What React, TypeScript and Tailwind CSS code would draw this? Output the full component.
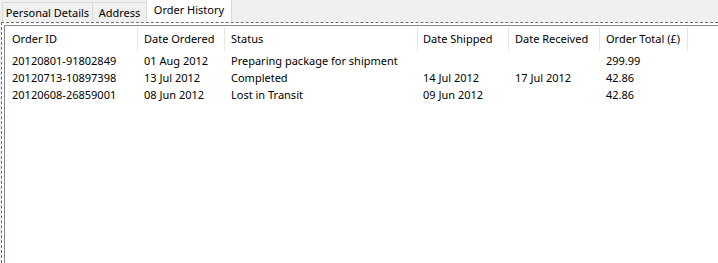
const columns = [
  { label: "Order ID", width: "w-[133px]", pad: "pl-[7px]" },
  { label: "Date Ordered", width: "w-[87px]", pad: "pl-[6px]" },
  { label: "Status", width: "w-[193px]", pad: "pl-[6px]" },
  { label: "Date Shipped", width: "w-[91px]", pad: "pl-[5px]" },
  { label: "Date Received", width: "w-[91px]", pad: "pl-[6px]" },
  { label: "Order Total (£)", width: "w-[88px]", pad: "pl-[6px]" },
];

const orders = [
  ["20120801-91802849", "01 Aug 2012", "Preparing package for shipment", "", "", "299.99"],
  ["20120713-10897398", "13 Jul 2012", "Completed", "14 Jul 2012", "17 Jul 2012", "42.86"],
  ["20120608-26859001", "08 Jun 2012", "Lost in Transit", "09 Jun 2012", "", "42.86"],
];

function Tab({ label, width, selected }: { label: string; width: string; selected?: boolean }) {
  if (selected) {
    return (
      <div
        className={`${width} relative -ml-[1px] h-[23px] shrink-0 border border-b-0 border-[#d9d9d9] bg-white pt-[2px] text-center leading-[16px]`}
      >
        {label}
      </div>
    );
  }
  return (
    <div
      className={`${width} mt-[2px] h-[20px] shrink-0 border border-b-0 border-[#d9d9d9] bg-[#f0f0f0] pt-[2px] text-center leading-[16px] -ml-[1px] first:ml-0`}
    >
      {label}
    </div>
  );
}

export default function App() {
  return (
    <div
      className="flex h-[263px] w-[718px] flex-col overflow-hidden bg-[#f0f0f0] text-[11px] text-black"
      style={{ fontFamily: '"Noto Sans", "Open Sans", sans-serif' }}
    >
      <div className="flex h-[22px] shrink-0 items-end pl-[2px]">
        <Tab label="Personal Details" width="w-[91px]" />
        <Tab label="Address" width="w-[55px]" />
        <Tab label="Order History" width="w-[86px]" selected />
      </div>

      <div className="ml-[1px] flex min-h-0 flex-1 flex-col border-l border-t border-dashed border-[#6d6d6d] bg-white pl-[2px] pt-[2px]">
        <div className="flex min-h-0 flex-1 flex-col border-l border-t border-[#828790] bg-white">
          <div className="flex h-[26px] shrink-0 items-stretch">
            {columns.map((col) => (
              <div
                key={col.label}
                className={`${col.width} ${col.pad} my-[1px] flex shrink-0 items-center whitespace-nowrap border-r border-[#e5e5e5]`}
              >
                {col.label}
              </div>
            ))}
          </div>

          <div className="flex flex-col">
            {orders.map((row) => (
              <div key={row[0]} className="flex h-[17px] items-center">
                {row.map((cell, i) => (
                  <div
                    key={i}
                    className={`${columns[i].width} ${columns[i].pad} shrink-0 whitespace-nowrap leading-[17px]`}
                  >
                    {cell}
                  </div>
                ))}
              </div>
            ))}
          </div>
        </div>
      </div>
    </div>
  );
}
